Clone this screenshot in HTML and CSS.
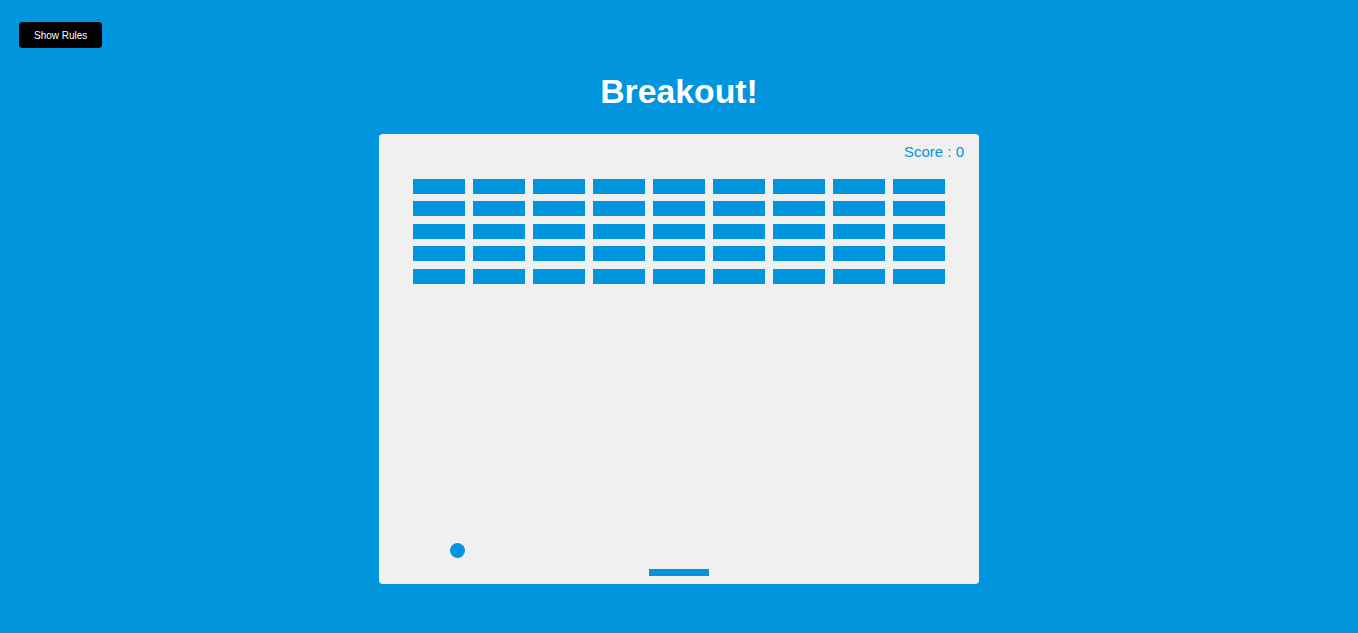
FILE: index.html
```html
<!DOCTYPE html>
<html lang="en">
<head>
<meta charset="UTF-8">
<title>Breakout!</title>
<link rel="stylesheet" href="styles.css">
</head>
<body>
<button class="btn rules-btn">Show Rules</button>
<h1 class="title">Breakout!</h1>
<div class="board">
  <div class="score">Score : 0</div>
  <div class="bricks">
    <div class="brick"></div><div class="brick"></div><div class="brick"></div><div class="brick"></div><div class="brick"></div><div class="brick"></div><div class="brick"></div><div class="brick"></div><div class="brick"></div>
    <div class="brick"></div><div class="brick"></div><div class="brick"></div><div class="brick"></div><div class="brick"></div><div class="brick"></div><div class="brick"></div><div class="brick"></div><div class="brick"></div>
    <div class="brick"></div><div class="brick"></div><div class="brick"></div><div class="brick"></div><div class="brick"></div><div class="brick"></div><div class="brick"></div><div class="brick"></div><div class="brick"></div>
    <div class="brick"></div><div class="brick"></div><div class="brick"></div><div class="brick"></div><div class="brick"></div><div class="brick"></div><div class="brick"></div><div class="brick"></div><div class="brick"></div>
    <div class="brick"></div><div class="brick"></div><div class="brick"></div><div class="brick"></div><div class="brick"></div><div class="brick"></div><div class="brick"></div><div class="brick"></div><div class="brick"></div>
  </div>
  <div class="ball"></div>
  <div class="paddle"></div>
</div>
</body>
</html>
```
FILE: styles.css
```css
* { box-sizing: border-box; }

body {
  margin: 0;
  min-height: 100vh;
  background-color: #0095dd;
  font-family: "Liberation Sans", Arial, Helvetica, sans-serif;
  display: flex;
  flex-direction: column;
  align-items: center;
  justify-content: center;
}

.title {
  font-size: 33.75px;
  font-weight: bold;
  color: #fff;
  margin: 22.6px 0;
  line-height: normal;
}

.btn {
  cursor: pointer;
  border: 0;
  padding: 7.5px 15px;
  background: #000;
  color: #fff;
  border-radius: 3.75px;
  font-family: "Liberation Sans", Arial, sans-serif;
  font-size: 10px;
  line-height: 11px;
}

.rules-btn {
  position: absolute;
  top: 22px;
  left: 19px;
}

.board {
  position: relative;
  width: 600px;
  height: 450px;
  background: #f0f0f0;
  border-radius: 3.75px;
  padding: 45px 0 0 33.75px;
}

.score {
  position: absolute;
  top: 9.6px;
  left: 525px;
  font-size: 15px;
  line-height: normal;
  color: #0095dd;
  white-space: nowrap;
}

.bricks {
  display: grid;
  grid-template-columns: repeat(9, 52.5px);
  grid-auto-rows: 15px;
  gap: 7.5px;
}

.brick {
  background: #0095dd;
}

.ball {
  position: absolute;
  left: 70.5px;
  top: 409.8px;
  width: 15px;
  height: 15px;
  border-radius: 50%;
  background: #0095dd;
}

.paddle {
  position: absolute;
  left: 270px;
  top: 435px;
  width: 60px;
  height: 7.5px;
  background: #0095dd;
}
```
